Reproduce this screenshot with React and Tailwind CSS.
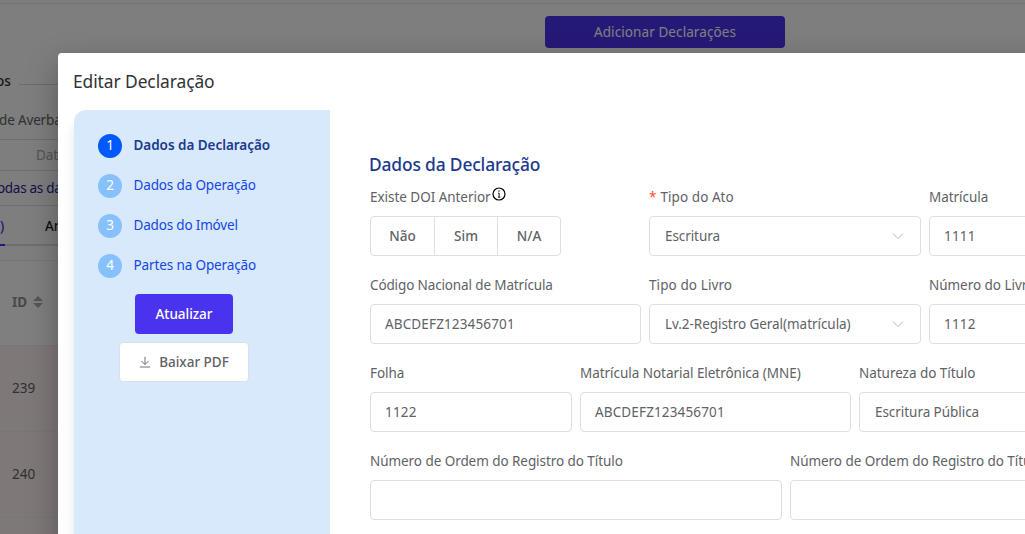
import { clsx } from 'clsx';

const steps = [
  { id: 1, label: 'Dados da Declaração', spacing: 'tracking-[-0.04px]', active: true },
  { id: 2, label: 'Dados da Operação', spacing: 'tracking-[-0.15px]' },
  { id: 3, label: 'Dados do Imóvel', spacing: 'tracking-[-0.18px]' },
  { id: 4, label: 'Partes na Operação', spacing: 'tracking-[-0.12px]' },
];

const ChevronIcon = () => (
  <svg className="w-3 h-3 text-[#b4b8c0] shrink-0" viewBox="0 0 12 12" fill="none" stroke="currentColor">
    <path d="M1 3.5l5 5 5-5" />
  </svg>
);

const DownloadIcon = () => (
  <svg className="w-3 h-3 shrink-0" viewBox="0 0 12 12" fill="none" stroke="currentColor" strokeWidth="0.9">
    <path d="M6 .8v7.7M2.4 4.9L6 8.5l3.6-3.6M.9 11h10.2" />
  </svg>
);

const InfoIcon = () => (
  <svg className="w-3.5 h-3.5 mb-[7px] ml-px text-black" viewBox="0 0 14 14" fill="none" stroke="currentColor">
    <circle cx="7" cy="7" r="6" strokeWidth="1.2" />
    <path d="M6.2 6h.9v4.2M5.9 10.2h2.4" strokeWidth="0.9" />
    <circle cx="7" cy="4" r=".7" fill="currentColor" stroke="none" />
  </svg>
);

const Field = ({ label, width, spacing = 'tracking-[-0.04px]', required, info, children }) => (
  <div className={clsx('shrink-0', width)}>
    <div className={clsx('flex items-center h-[39px] pt-px', spacing)}>
      {required && <span className="text-[#ff4d2e] mr-1">*</span>}
      {label}
      {info && <InfoIcon />}
    </div>
    {children}
  </div>
);

const Input = ({ value, select, arrow = select, spacing = 'tracking-[-0.05px]' }) => (
  <div
    className={clsx(
      'flex items-center justify-between h-10 rounded border border-[#dcdfe6] bg-white pr-4',
      select ? 'pl-[15px]' : 'pl-3.5',
      spacing,
    )}
  >
    <span>{value}</span>
    {arrow && <ChevronIcon />}
  </div>
);

const BackgroundPage = () => (
  <div className="w-full h-full bg-[#fafcfb] text-[13.5px]">
    <div className="h-[3px] bg-[#fdfdfd]" />
    <div className="h-[57px] border-t border-[#e4e4e8] pl-[545px] pt-3">
      <button className="w-60 h-8 rounded bg-[#4a33ef] text-white tracking-[0.09px]">Adicionar Declarações</button>
    </div>
    <div className="w-[58px] overflow-hidden">
      <div className="flex items-center h-[42px] text-[#303133] font-medium">
        <span className="w-[19px] shrink-0 -ml-1">os</span>
        <span className="ml-1 mt-[6px] h-px flex-1 bg-[#d4d6dd]" />
      </div>
      <div className="h-[37px] pt-2 text-[#606266] tracking-[-0.15px]">
        <span className="-ml-px">de Averbação</span>
      </div>
      <div className="flex items-center h-8 border-y border-[#dcdfe6] pl-9 text-[#a8abb2] tracking-[-0.1px]">Data</div>
      <div className="flex items-center h-[34px] text-[#2c1c95] tracking-[-0.3px]">
        <span className="-ml-[3px]">odas as datas</span>
      </div>
      <div className="flex h-[41px] border-t border-b-2 border-[#dcdfe6] font-medium">
        <span className="w-[5px] h-10 shrink-0 border-b-2 border-[#4a33ef] leading-[40px] text-[#4a33ef]">)</span>
        <span className="pl-10 leading-[40px] text-[#1f1f1f]">Anteriores</span>
      </div>
      <div className="h-[14px]" />
    </div>
    <div className="border-t border-[#ebeef5] bg-white text-[#606266]">
      <div className="flex items-center h-[84px] pl-3 pb-0.5 font-bold text-[#909399]">
        ID
        <svg className="ml-[6px] w-2.5 h-3" viewBox="0 0 10 12" fill="#a8abb2">
          <path d="M5 0l5 5H0zM5 12l5-5H0z" />
        </svg>
      </div>
      {['239', '240', '241'].map((id) => (
        <div key={id} className="flex items-center h-[86px] border-t border-[#ebeef5] bg-[#fef0f0] pl-3">
          {id}
        </div>
      ))}
    </div>
  </div>
);

const Sidebar = () => (
  <aside className="w-64 h-[440px] shrink-0 rounded-tl-xl bg-[#d9e9fc] pt-6 shadow-[-4px_10px_12px_-4px_rgba(0,0,0,0.1)]">
    <div className="flex flex-col gap-4 pl-6">
      {steps.map((step) => (
        <div key={step.id} className="flex items-center h-6">
          <span
            className={clsx(
              'flex items-center justify-center w-6 h-6 rounded-full pb-px text-white',
              step.active ? 'bg-[#0059ff]' : 'bg-[#87c1fd]',
            )}
          >
            {step.id}
          </span>
          <span
            className={clsx(
              'ml-[11.5px] -mt-0.5',
              step.spacing,
              step.active ? 'font-semibold text-[#1c398e]' : 'text-[#1447e6]',
            )}
          >
            {step.label}
          </span>
        </div>
      ))}
    </div>
    <div className="flex flex-col items-start gap-2 pt-4">
      <button className="ml-[61px] w-[98px] h-10 rounded bg-[#4a33ef] text-white font-medium tracking-[-0.05px]">
        Atualizar
      </button>
      <button className="ml-[45px] flex items-center justify-center w-[130px] h-10 rounded border border-[#dcdfe6] bg-white font-medium">
        <DownloadIcon />
        <span className="ml-2">Baixar PDF</span>
      </button>
    </div>
  </aside>
);

const DeclarationForm = () => (
  <main className="pt-10 pl-10">
    <h2 className="h-7 -ml-px text-[17.4px] leading-7 font-medium text-[#1c398e] tracking-[-0.16px]">
      Dados da Declaração
    </h2>
    <div className="flex flex-col gap-[9px] -mt-px">
      <div className="flex gap-2">
        <Field label="Existe DOI Anterior" width="w-[271px]" info>
          <div className="inline-flex h-10 rounded border border-[#dcdfe6] divide-x divide-[#dcdfe6] font-medium">
            <span className="flex items-center justify-center w-16">Não</span>
            <span className="flex items-center justify-center w-[63px]">Sim</span>
            <span className="flex items-center justify-center w-[62px]">N/A</span>
          </div>
        </Field>
        <Field label="Tipo do Ato" width="w-[272px]" spacing="tracking-[0.06px]" required>
          <Input value="Escritura" spacing="tracking-[-0.08px]" select />
        </Field>
        <Field label="Matrícula" width="w-[272px]">
          <Input value="1111" spacing="tracking-[0.2px]" />
        </Field>
      </div>
      <div className="flex gap-2">
        <Field label="Código Nacional de Matrícula" width="w-[271px]" spacing="tracking-[-0.13px]">
          <Input value="ABCDEFZ123456701" spacing="tracking-[0.14px]" />
        </Field>
        <Field label="Tipo do Livro" width="w-[272px]" spacing="tracking-[0.1px]">
          <Input value="Lv.2-Registro Geral(matrícula)" select />
        </Field>
        <Field label="Número do Livro" width="w-[272px]">
          <Input value="1112" spacing="tracking-[0.2px]" />
        </Field>
      </div>
      <div className="flex gap-2">
        <Field label="Folha" width="w-[202px]">
          <Input value="1122" spacing="tracking-[0.2px]" />
        </Field>
        <Field label="Matrícula Notarial Eletrônica (MNE)" width="w-[271px]">
          <Input value="ABCDEFZ123456701" spacing="tracking-[0.14px]" />
        </Field>
        <Field label="Natureza do Título" width="w-[272px]">
          <Input value="Escritura Pública" select />
        </Field>
      </div>
      <div className="flex gap-2">
        <Field label="Número de Ordem do Registro do Título" width="w-[412px]" spacing="tracking-[-0.06px]">
          <Input />
        </Field>
        <Field label="Número de Ordem do Registro do Título" width="w-[412px]" spacing="tracking-[-0.06px]">
          <Input />
        </Field>
      </div>
    </div>
  </main>
);

const App = () => (
  <div className="relative w-[1025px] h-[534px] overflow-hidden whitespace-nowrap font-['Noto_Sans','Open_Sans',sans-serif]">
    <BackgroundPage />
    <div className="absolute inset-0 bg-black/50 pt-[53px] pl-[58px]">
      <div className="w-[1200px] h-[600px] rounded bg-white pl-4 text-[13.5px] text-[#606266] shadow-[0_12px_32px_rgba(0,0,0,0.3)]">
        <h1 className="h-[57px] -ml-px leading-[57px] text-[17.4px] text-[#303133] tracking-[-0.08px]">
          Editar Declaração
        </h1>
        <div className="flex">
          <Sidebar />
          <DeclarationForm />
        </div>
      </div>
    </div>
  </div>
);

export default App;
